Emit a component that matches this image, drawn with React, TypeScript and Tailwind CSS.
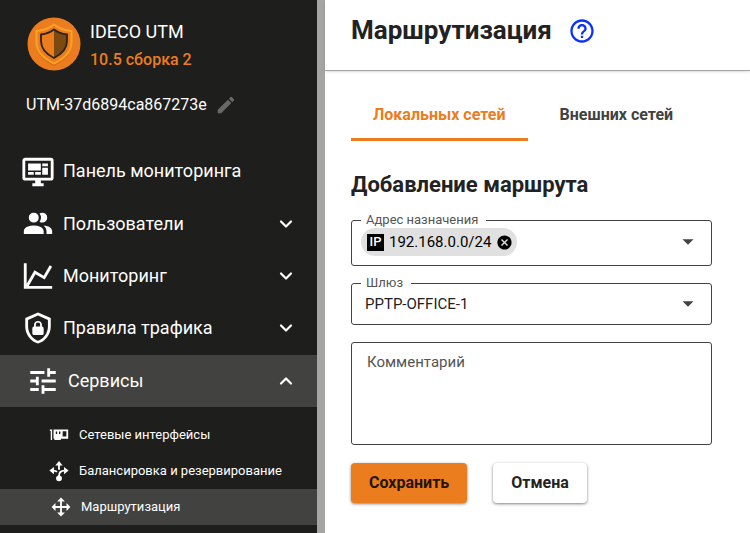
import React from "react";
import { MdCancel, MdEdit, MdHelpOutline, MdTune } from "react-icons/md";

function Icon({ d, className }: { d: string; className: string }) {
  return (
    <svg viewBox="0 0 24 24" fill="currentColor" fillRule="evenodd" className={`shrink-0 ${className}`} aria-hidden="true">
      <path d={d} />
    </svg>
  );
}

const icons = {
  dashboard:
    "M21 16V4H3v12h18m0-14a2 2 0 0 1 2 2v12a2 2 0 0 1-2 2h-7v2h2v2H8v-2h2v-2H3a2 2 0 0 1-2-2V4c0-1.11.89-2 2-2h18M5 6h9v5H5V6m10 0h4v2h-4V6m4 3v5h-4V9h4M5 12h4v2H5v-2m5 0h4v2h-4v-2Z",
  users:
    "M16 17v2H2v-2s0-4 7-4 7 4 7 4m-3.5-9.5A3.5 3.5 0 1 0 9 11a3.5 3.5 0 0 0 3.5-3.5m3.44 5.5A5.32 5.32 0 0 1 18 17v2h4v-2s0-3.63-6.06-4M15 4a3.39 3.39 0 0 0-1.93.59 5 5 0 0 1 0 5.82A3.39 3.39 0 0 0 15 11a3.5 3.5 0 0 0 0-7",
  chart: "M16 11.78l4.24-7.33 1.73 1-5.23 9.05-6.51-3.75L5.46 19H22v2H2V3h2v14.54L9.5 8l6.5 3.78Z",
  shield:
    "M21 11c0 5.5-3.8 10.7-9 12c-5.2-1.3-9-6.5-9-12V5l9-4l9 4v6m-9 10c3.8-1 7-5.5 7-9.8V6.3l-7-3.1l-7 3.1v4.9C5 15.5 8.3 20 12 21m2.8-10V9.5C14.8 8.1 13.4 7 12 7S9.2 8.1 9.2 9.5V11c-.6 0-1.2.6-1.2 1.2v3.5c0 .7.6 1.3 1.2 1.3h5.5c.7 0 1.3-.6 1.3-1.2v-3.5c0-.7-.6-1.3-1.2-1.3m-1.3 0h-3V9.5c0-.8.7-1.3 1.5-1.3s1.5.5 1.5 1.3V11Z",
  card: "M2 6h2.500v11.500H3V7.500H2V6m4 0h16v10h-8v1.500H7V16H6V6m2.500 2.200v2.600H10V8.200H8.500m3.500 0v2.600h1.500V8.200H12m4-.2v5.500h4V8h-4",
  move: "M13 6v5h5V7.750L22.250 12 18 16.250V13h-5v5h3.250L12 22.250 7.750 18H11v-5H6v3.250L1.750 12 6 7.750V11h5V6H7.750L12 1.750 16.250 6H13Z",
};

function ForkIcon() {
  return (
    <svg viewBox="0 0 24 24" className="size-[22px] shrink-0" aria-hidden="true">
      <path d="M12 1l4 5H8zM1.500 11.500l5-4v8zM22.500 11.500l-5-4v8z" fill="currentColor" />
      <circle cx="12" cy="20" r="3.200" fill="currentColor" />
      <path d="M12 5v5.500M6 11.500c1.600 0 2.900.5 3.800 1.500M12 19.500v-2c0-3.500 2.200-6 6-6" fill="none" stroke="currentColor" strokeWidth="2" />
    </svg>
  );
}

function Chevron({ up = false }: { up?: boolean }) {
  return (
    <svg viewBox="0 0 24 24" className="ml-auto size-6 shrink-0" fill="none" stroke="currentColor" strokeWidth="2.200" strokeLinecap="round" strokeLinejoin="round" aria-hidden="true">
      <path d={up ? "M7 14.500l5-5 5 5" : "M7 9.500l5 5 5-5"} />
    </svg>
  );
}

function Logo() {
  return (
    <svg viewBox="0 0 54 54" className="size-[54px] shrink-0" aria-hidden="true">
      <circle cx="27" cy="27" r="26.500" fill="#eb7d1e" />
      <path d="M27 9C22 13 16 15 9 15.500V27c0 9 7 17 18 22 11-5 18-13 18-22V15.500C38 15 32 13 27 9Z" fill="#a85410" opacity=".35" />
      <path d="M27 7.500C22 11.500 16 13.500 9.500 14V25c0 9 7 16.500 17.500 21.500C37.500 41.500 44.500 34 44.500 25V14C38 13.500 32 11.500 27 7.500Z" fill="#eb7d1e" stroke="#ffa029" strokeWidth="2" />
      <path d="M27 12.500v28.500c8-4 13-10 13-17V17.500c-5-.5-9-2-13-5Z" fill="#7a4a10" />
      <path d="M27 12.500c-4 3-8 4.500-13 5V24c0 7 5 13 13 17 8-4 13-10 13-17V17.500c-5-.5-9-2-13-5Z" fill="none" stroke="#29241c" strokeWidth="1.800" />
    </svg>
  );
}

const sections = [
  { label: "Пользователи", icon: icons.users },
  { label: "Мониторинг", icon: icons.chart },
  { label: "Правила трафика", icon: icons.shield },
];

const Arrow = () => <Icon d="M6 9h12l-6 6Z" className="size-[22px] text-[#424240]" />;

export default function App() {
  return (
    <div className="flex h-screen overflow-hidden bg-white font-[Roboto,sans-serif] text-[#222]">
      <aside className="w-[325px] shrink-0 border-r-8 border-[#a5a5a3] bg-[#1e1e1c] text-white">
        <div className="flex items-start gap-[9px] pt-[17px] pl-[27px]">
          <Logo />
          <div className="pt-px leading-7">
            <p className="text-[18px]">IDECO UTM</p>
            <p className="text-[16px] font-medium text-[#eb7d1e]">10.5 сборка 2</p>
          </div>
        </div>
        <div className="flex h-[71px] items-center gap-2 pb-[10px] pl-[26px]">
          <span className="text-[16px] leading-6">UTM-37d6894ca867273e</span>
          <button type="button" aria-label="Изменить имя" className="text-[#686866]">
            <MdEdit className="size-[22px]" />
          </button>
        </div>
        <nav>
          <a href="#dashboard" className="flex h-[53px] items-center gap-2 pl-[21px] text-[18px]">
            <Icon d={icons.dashboard} className="size-[34px]" />
            <span className="pb-[2px]">Панель мониторинга</span>
          </a>
          {sections.map((s) => (
            <button key={s.label} type="button" aria-expanded="false" className="flex h-[52px] w-full items-center gap-2 pr-[19px] pl-[21px] text-[18px]">
              <Icon d={s.icon} className="size-[34px]" />
              <span className="pb-[2px]">{s.label}</span>
              <Chevron />
            </button>
          ))}
          <button type="button" aria-expanded="true" className="mt-px flex h-[52px] w-full items-center gap-2 bg-[#424240] pr-[19px] pl-[26px] text-[18px]">
            <MdTune className="size-[34px] shrink-0" />
            <span className="pb-[2px]">Сервисы</span>
            <Chevron up />
          </button>
          <div className="pt-[10px] text-[13px]">
            <a href="#interfaces" className="flex h-9 items-center gap-[9px] pl-12">
              <Icon d={icons.card} className="size-[22px]" />
              Сетевые интерфейсы
            </a>
            <a href="#balancing" className="flex h-9 items-center gap-[9px] pl-12">
              <ForkIcon />
              Балансировка и резервирование
            </a>
            <a href="#routing" aria-current="page" className="flex h-9 items-center gap-[9px] bg-[#424240] pl-[50px]">
              <Icon d={icons.move} className="size-[22px]" />
              Маршрутизация
            </a>
          </div>
        </nav>
      </aside>

      <main className="min-w-0 flex-1">
        <header className="flex h-[71px] items-center gap-4 border-b border-[#a5a5a3] pb-[9px] pl-[26px] shadow-sm">
          <h1 className="text-[26px] font-bold">Маршрутизация</h1>
          <button type="button" aria-label="Справка" className="text-[#0a32fa]">
            <MdHelpOutline className="size-7" />
          </button>
        </header>

        <div className="pr-[38px] pl-[26px]">
          <div role="tablist" className="flex gap-[10px] pt-5 text-[16px] font-bold">
            <button type="button" role="tab" aria-selected="true" className="h-[50px] border-b-3 border-[#eb7d1e] px-[22px] text-[#eb7d1e]">
              Локальных сетей
            </button>
            <button type="button" role="tab" aria-selected="false" className="h-[50px] border-b-3 border-transparent px-[22px] text-[#424240]">
              Внешних сетей
            </button>
          </div>

          <h2 className="pt-7 text-[22px] leading-8 font-bold">Добавление маршрута</h2>

          <form>
            <fieldset className="mt-[11px] min-w-0 rounded-[3px] border border-[#424240] pb-[9px]">
              <legend className="ml-[9px] pr-2 pl-[5px] text-[13px] leading-4 text-[#555]">
                <label htmlFor="address">Адрес назначения</label>
              </legend>
              <div className="flex items-center pr-3 pl-[9px]">
                <span className="flex h-7 items-center gap-[5px] rounded-full bg-[#e0e0e0] pr-1 pl-[6px] text-[15px] text-black">
                  <span className="flex size-[17px] items-center justify-center bg-black text-[13px] font-medium text-white">IP</span>
                  192.168.0.0/24
                  <button type="button" aria-label="Удалить адрес">
                    <MdCancel className="size-[17px]" />
                  </button>
                </span>
                <input id="address" className="w-0 min-w-0 flex-1 outline-none" />
                <Arrow />
              </div>
            </fieldset>

            <fieldset className="mt-[9px] min-w-0 rounded-[3px] border border-[#424240] pb-[7px]">
              <legend className="ml-[9px] pr-2 pl-[5px] text-[13px] leading-4 text-[#555]">
                <label htmlFor="gateway">Шлюз</label>
              </legend>
              <div className="flex items-center pr-3 pl-[13px]">
                <select id="gateway" className="h-[26px] min-w-0 flex-1 appearance-none text-[15px] outline-none">
                  <option>PPTP-OFFICE-1</option>
                </select>
                <Arrow />
              </div>
            </fieldset>

            <textarea aria-label="Комментарий" placeholder="Комментарий" className="mt-[17px] block h-[103px] w-full resize-none rounded-[3px] border border-[#424240] px-[15px] py-[7px] text-[15px] leading-6 outline-none placeholder:text-[#555]" />

            <div className="flex gap-[26px] pt-[18px] text-[16px] font-bold">
              <button type="submit" className="h-10 rounded-sm bg-[#eb7d1e] px-[18px] text-[#251400] shadow-[0_1px_3px_rgba(0,0,0,0.5)]">
                Сохранить
              </button>
              <button type="button" className="h-10 rounded-sm bg-white px-[18px] shadow-[0_1px_3px_rgba(0,0,0,0.5)]">
                Отмена
              </button>
            </div>
          </form>
        </div>
      </main>
    </div>
  );
}
